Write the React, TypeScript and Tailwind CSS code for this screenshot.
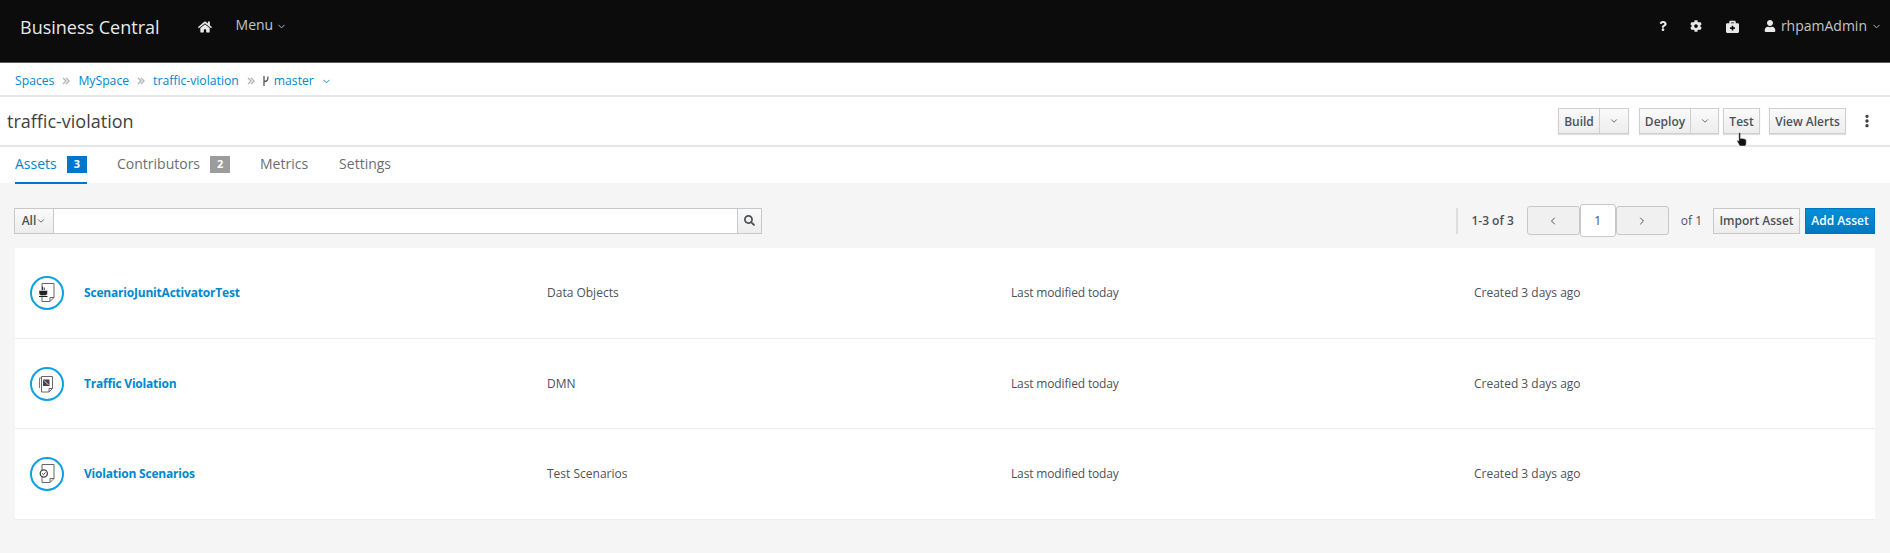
import { ChevronDown, ChevronLeft, ChevronRight, EllipsisVertical } from "lucide-react";
import { FaBriefcaseMedical, FaCog, FaHome, FaQuestion, FaSearch, FaUser } from "react-icons/fa";

const assets = [
  { name: "ScenarioJunitActivatorTest", type: "Data Objects", icon: "java", rowH: "h-[91px]" },
  { name: "Traffic Violation", type: "DMN", icon: "dmn", rowH: "h-[90px]" },
  { name: "Violation Scenarios", type: "Test Scenarios", icon: "scenario", rowH: "h-[91px]" },
];

const Crumb = ({ label }: { label: string }) => (
  <>
    <a className="text-[#0088ce]">{label}</a>
    <svg width="8" height="8" viewBox="0 0 8 8" className="mx-[8px] text-[#b5b5b5]" fill="none" stroke="currentColor" strokeWidth="1.4">
      <path d="M1 1l3 3-3 3M4 1l3 3-3 3" />
    </svg>
  </>
);

const SplitButton = ({ label, labelW, caretW }: { label: string; labelW: string; caretW: string }) => (
  <div className="flex h-[26px] border border-[#cfcfcf] bg-linear-to-b from-[#fafafa] to-[#ededed] text-[12px] font-semibold text-[#4d5258] shadow-[0_1px_1px_rgba(0,0,0,0.12)]">
    <div className={`flex items-center justify-center border-r border-[#cfcfcf] pt-px ${labelW}`}>{label}</div>
    <div className={`flex items-center justify-center ${caretW}`}>
      <ChevronDown size={10} />
    </div>
  </div>
);

const AssetIcon = ({ kind }: { kind: string }) => (
  <div className="flex h-[34px] w-[34px] items-center justify-center rounded-full border-2 border-[#0da0e2] bg-white">
    <svg width="22" height="22" viewBox="0 0 22 22" fill="none">
      {kind === "dmn" ? (
        <>
          <path d="M3.5 15v-10h11" stroke="#777" strokeWidth="1" />
          <path d="M5.5 3.5h11v12l-3.5 3.5H5.5z" stroke="#666" strokeWidth="1" fill="#fff" />
          <path d="M13 19v-3.5h3.5" stroke="#666" strokeWidth="1" />
          <path d="M7 6.5h6.5v6.5H7z" fill="#444" />
          <path d="M8 7.5l4.5 4.5" stroke="#ddd" strokeWidth="1" />
        </>
      ) : (
        <>
          <path d="M6 1.5h12v14l-4 4H6z" stroke="#666" strokeWidth="1" fill="#fff" />
          <path d="M14 19.5v-4h4" stroke="#666" strokeWidth="1" />
        </>
      )}
      {kind === "java" && (
        <>
          <path d="M3 8.5h8.5v2.5a2.5 2.5 0 0 1-2.5 2.5H5.5A2.5 2.5 0 0 1 3 11z" fill="#222" stroke="#fff" strokeWidth="0.5" />
          <path d="M6.5 4.5v3.5M8.2 5.5v2.5" stroke="#333" strokeWidth="1" />
          <path d="M3 14.5h8.5" stroke="#222" strokeWidth="1" />
        </>
      )}
      {kind === "scenario" && (
        <>
          <circle cx="7.8" cy="10.5" r="3.6" stroke="#444" strokeWidth="1.3" fill="#fff" />
          <path d="M6.2 10.5l1.3 1.3 2-2.4" stroke="#444" strokeWidth="1" />
        </>
      )}
    </svg>
  </div>
);

const App = () => {
  return (
    <div className="flex h-[553px] w-[1890px] flex-col overflow-hidden bg-[#f5f5f5] font-['Open_Sans',sans-serif] text-[#363636]">
      {/* Navbar */}
      <header className="flex h-[63px] items-start justify-between border-b border-[#5a5a5a] bg-[#0c0c0c]">
        <div className="flex items-start pt-[15px]">
          <span className="ml-[20px] text-[18px] leading-[24px] text-[#e8e8e8]">Business Central</span>
          <FaHome size={14} className="mt-[5px] ml-[38px] text-[#e8e8e8]" />
          <span className="ml-[24px] text-[14px] leading-[20px] text-[#c4c4c4]">Menu</span>
          <ChevronDown size={11} className="mt-[6px] ml-[3px] text-[#c4c4c4]" />
        </div>
        <div className="flex items-center pt-[16px] pr-[8px] text-[#e8e8e8]">
          <FaQuestion size={10} />
          <FaCog size={12} className="ml-[22px]" />
          <FaBriefcaseMedical size={13} className="ml-[24px]" />
          <FaUser size={12} className="ml-[25px]" />
          <span className="ml-[5px] text-[14px] leading-[20px] text-[#c4c4c4]">rhpamAdmin</span>
          <ChevronDown size={11} className="ml-[4px] text-[#c4c4c4]" />
        </div>
      </header>

      {/* Breadcrumb */}
      <nav className="flex h-[34px] items-center border-b-2 border-[#e6e6e6] bg-white pt-[4px] pl-[15px] text-[12.2px]">
        <Crumb label="Spaces" />
        <Crumb label="MySpace" />
        <Crumb label="traffic-violation" />
        <svg width="8" height="12" viewBox="0 0 8 12" fill="none" stroke="#555" strokeWidth="1.3" className="ml-[-1px]">
          <path d="M2 1v10M2 6.5c3 0 4-1 4-5" />
        </svg>
        <a className="ml-[4px] text-[#0088ce]">master</a>
        <ChevronDown size={11} className="ml-[7px] text-[#0088ce]" />
      </nav>

      {/* Title row */}
      <div className="flex h-[50px] items-center justify-between border-b-2 border-[#e6e6e6] bg-white pr-[15px] pl-[7px]">
        <h1 className="text-[18px] text-[#3f3f3f]">traffic-violation</h1>
        <div className="flex items-center">
          <SplitButton label="Build" labelW="w-[41px]" caretW="w-[28px]" />
          <div className="ml-[10px]">
            <SplitButton label="Deploy" labelW="w-[51px]" caretW="w-[27px]" />
          </div>
          <div className="relative ml-[4px] flex h-[26px] w-[37px] items-center justify-center border border-[#cfcfcf] bg-linear-to-b from-[#fafafa] to-[#ededed] pt-px text-[12px] font-semibold text-[#4d5258] shadow-[0_1px_1px_rgba(0,0,0,0.12)]">
            Test
            <svg width="15" height="16" viewBox="0 0 14 17" className="absolute top-[23px] left-[11px]">
              <path d="M3 1.5a1 1 0 0 1 2 0V7l1-.4 1 .2 1 .2 2 .5 1 1v4.5l-1 2H4l-1-2L1 9.5 2 8.5l1 1z" fill="#111" stroke="#fff" strokeWidth="0.6" />
            </svg>
          </div>
          <div className="ml-[9px] flex h-[26px] w-[77px] items-center justify-center border border-[#cfcfcf] bg-linear-to-b from-[#fafafa] to-[#ededed] pt-px text-[12px] font-semibold text-[#4d5258] shadow-[0_1px_1px_rgba(0,0,0,0.12)]">
            View Alerts
          </div>
          <EllipsisVertical size={16} strokeWidth={3} className="ml-[13px] text-[#333]" />
        </div>
      </div>

      {/* Tabs */}
      <div className="flex h-[36px] bg-white pl-[15px] text-[14px] text-[#6a6e73]">
        <div className="flex h-[37px] w-[72px] items-start justify-between border-b-[2px] border-[#0076cf] pt-[6px] text-[#0088ce]">
          <span>Assets</span>
          <span className="mt-[3px] flex h-[17px] w-[20px] items-center justify-center bg-[#0076cf] text-[11px] font-bold text-white">3</span>
        </div>
        <div className="ml-[30px] flex items-start pt-[6px]">
          <span>Contributors</span>
          <span className="mt-[3px] ml-[10px] flex h-[17px] w-[20px] items-center justify-center bg-[#9c9c9c] text-[11px] font-bold text-white">2</span>
        </div>
        <span className="ml-[30px] pt-[6px]">Metrics</span>
        <span className="ml-[31px] pt-[6px]">Settings</span>
      </div>

      {/* Toolbar */}
      <div className="flex h-[65px] items-center justify-between pt-[10px] pr-[15px] pl-[14px]">
        <div className="flex h-[26px] items-stretch text-[12px]">
          <div className="flex w-[40px] items-center justify-center border border-[#c8c8c8] bg-linear-to-b from-[#fafafa] to-[#ededed] font-semibold text-[#4d5258]">
            All
            <ChevronDown size={10} />
          </div>
          <div className="ml-[-1px] w-[685px] border border-[#c8c8c8] bg-white" />
          <div className="ml-[-1px] flex w-[25px] items-center justify-center border border-[#c8c8c8] bg-linear-to-b from-[#fafafa] to-[#ededed] text-[#4d5258]">
            <FaSearch size={11} />
          </div>
        </div>
        <div className="flex items-center text-[12px] text-[#4d5258]">
          <div className="h-[26px] border-l-2 border-[#dedede]" />
          <span className="ml-[13px] font-semibold">1-3 of 3</span>
          <div className="ml-[13px] flex h-[29px] w-[53px] items-center justify-center rounded-[3px] border border-[#c8c8c8] bg-[#f0f0f0] text-[#4d5258]">
            <ChevronLeft size={12} />
          </div>
          <div className="flex h-[33px] w-[36px] items-center justify-center rounded-[3px] border border-[#c8c8c8] bg-white">1</div>
          <div className="flex h-[29px] w-[53px] items-center justify-center rounded-[3px] border border-[#c8c8c8] bg-[#f0f0f0] text-[#4d5258]">
            <ChevronRight size={12} />
          </div>
          <span className="ml-[12px]">of 1</span>
          <div className="ml-[11px] flex h-[26px] w-[87px] items-center justify-center border border-[#c8c8c8] bg-linear-to-b from-[#fafafa] to-[#ededed] font-semibold">Import Asset</div>
          <div className="ml-[5px] flex h-[26px] w-[70px] items-center justify-center border border-[#0076c0] bg-linear-to-b from-[#0090d8] to-[#0078c0] font-semibold text-white">Add Asset</div>
        </div>
      </div>

      {/* Asset list */}
      <div className="mx-[15px] bg-white">
        {assets.map((a) => (
          <div key={a.name} className={`grid grid-cols-[532px_464px_463px_1fr] items-center border-b border-[#ececec] text-[12px] text-[#4d5258] ${a.rowH}`}>
            <div className="flex items-center pl-[15px]">
              <AssetIcon kind={a.icon} />
              <a className="ml-[20px] font-bold tracking-[-0.2px] text-[#0088ce]">{a.name}</a>
            </div>
            <span>{a.type}</span>
            <span className="tracking-[-0.15px]">Last modified today</span>
            <span>Created 3 days ago</span>
          </div>
        ))}
      </div>
    </div>
  );
};

export default App;
